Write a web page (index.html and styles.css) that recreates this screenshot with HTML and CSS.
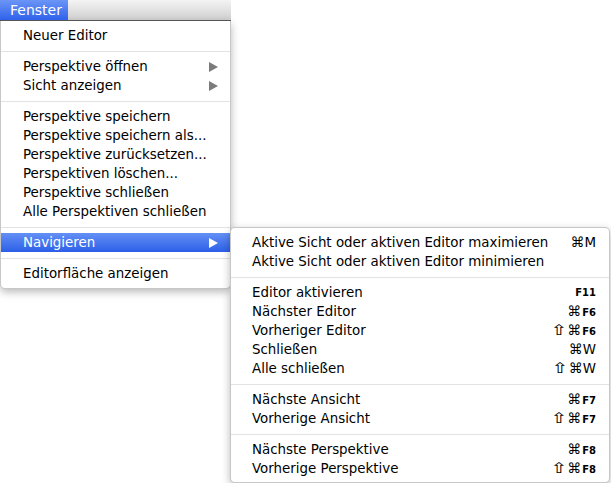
FILE: index.html
```
<!DOCTYPE html>
<html lang="de">
<head>
<meta charset="utf-8">
<link rel="stylesheet" href="styles.css">
</head>
<body>
<div class="screen">
  <div class="menubar"><span class="title">Fenster</span></div>
  <div class="menu main">
    <div class="item">Neuer Editor</div>
    <div class="sep"></div>
    <div class="item">Perspektive öffnen<span class="arrow"></span></div>
    <div class="item">Sicht anzeigen<span class="arrow"></span></div>
    <div class="sep"></div>
    <div class="item">Perspektive speichern</div>
    <div class="item">Perspektive speichern als...</div>
    <div class="item">Perspektive zurücksetzen...</div>
    <div class="item">Perspektiven löschen...</div>
    <div class="item">Perspektive schließen</div>
    <div class="item">Alle Perspektiven schließen</div>
    <div class="sep"></div>
    <div class="item active">Navigieren<span class="arrow"></span></div>
    <div class="sep"></div>
    <div class="item">Editorfläche anzeigen</div>
  </div>
  <div class="menu sub">
    <div class="item"><span>Aktive Sicht oder aktiven Editor maximieren</span><span class="key"><span class="sym">⌘</span>M</span></div>
    <div class="item"><span>Aktive Sicht oder aktiven Editor minimieren</span></div>
    <div class="sep"></div>
    <div class="item"><span>Editor aktivieren</span><span class="key"><span class="fk">F11</span></span></div>
    <div class="item"><span>Nächster Editor</span><span class="key"><span class="sym">⌘</span><span class="fk">F6</span></span></div>
    <div class="item"><span>Vorheriger Editor</span><span class="key"><span class="sym shift">⇧</span><span class="sym">⌘</span><span class="fk">F6</span></span></div>
    <div class="item"><span>Schließen</span><span class="key"><span class="sym">⌘</span>W</span></div>
    <div class="item"><span>Alle schließen</span><span class="key"><span class="sym shift">⇧</span><span class="sym">⌘</span>W</span></div>
    <div class="sep"></div>
    <div class="item"><span>Nächste Ansicht</span><span class="key"><span class="sym">⌘</span><span class="fk">F7</span></span></div>
    <div class="item"><span>Vorherige Ansicht</span><span class="key"><span class="sym shift">⇧</span><span class="sym">⌘</span><span class="fk">F7</span></span></div>
    <div class="sep"></div>
    <div class="item"><span>Nächste Perspektive</span><span class="key"><span class="sym">⌘</span><span class="fk">F8</span></span></div>
    <div class="item"><span>Vorherige Perspektive</span><span class="key"><span class="sym shift">⇧</span><span class="sym">⌘</span><span class="fk">F8</span></span></div>
  </div>
</div>
</body>
</html>
```
FILE: styles.css
```
html, body {
  margin: 0;
  padding: 0;
  background: #ffffff;
}
body {
  font-family: "DejaVu Sans", "Liberation Sans", sans-serif;
  font-size: 13.4px;
  color: #000;
}
.screen {
  position: relative;
  width: 611px;
  height: 483px;
  overflow: hidden;
}
.menubar {
  width: 231px;
  height: 20px;
  background: linear-gradient(#f4f4f4, #cfcfcf);
  border-bottom: 1px solid #5a5a5a;
  display: flex;
}
.title {
  display: flex;
  align-items: center;
  padding: 0 9px 0 10px;
  width: 49px;
  background: linear-gradient(#6b95f6, #2f62ea);
  color: #fff;
  font-size: 14px;
}
.menu {
  background: #fff;
  box-sizing: border-box;
  box-shadow: 0 3px 8px rgba(0, 0, 0, 0.28);
  border: 1px solid rgba(0, 0, 0, 0.22);
}
.main {
  width: 231px;
  border-top: none;
  border-radius: 0 0 5px 5px;
  padding: 5px 0 5px;
}
.sub {
  position: absolute;
  left: 230px;
  top: 227px;
  width: 380px;
  border-radius: 5px;
  padding: 5px 0 4px;
}
.item {
  height: 19px;
  line-height: 19px;
  padding: 0 12px 0 22px;
  display: flex;
  align-items: center;
  justify-content: space-between;
  white-space: nowrap;
}
.sub .item {
  padding: 0 13px 0 21px;
}
.item.active {
  background: linear-gradient(#6490f5, #2c5fe8);
  color: #fff;
}
.sep {
  height: 12px;
  display: flex;
  align-items: center;
}
.sep::before {
  content: "";
  display: block;
  width: 100%;
  height: 1px;
  background: #e3e3e3;
}
.arrow {
  width: 0;
  height: 0;
  border-top: 5px solid transparent;
  border-bottom: 5px solid transparent;
  border-left: 9px solid #7b7b7b;
}
.active .arrow {
  border-left-color: #fff;
}
.key {
  display: flex;
  align-items: baseline;
}
.sym {
  font-size: 14px;
}
.shift {
  display: inline-block;
  font-size: 15px;
  transform: scaleX(1.35);
  margin-right: 2px;
}
.fk {
  font-size: 10px;
  font-weight: bold;
  margin-left: 1px;
}
```
